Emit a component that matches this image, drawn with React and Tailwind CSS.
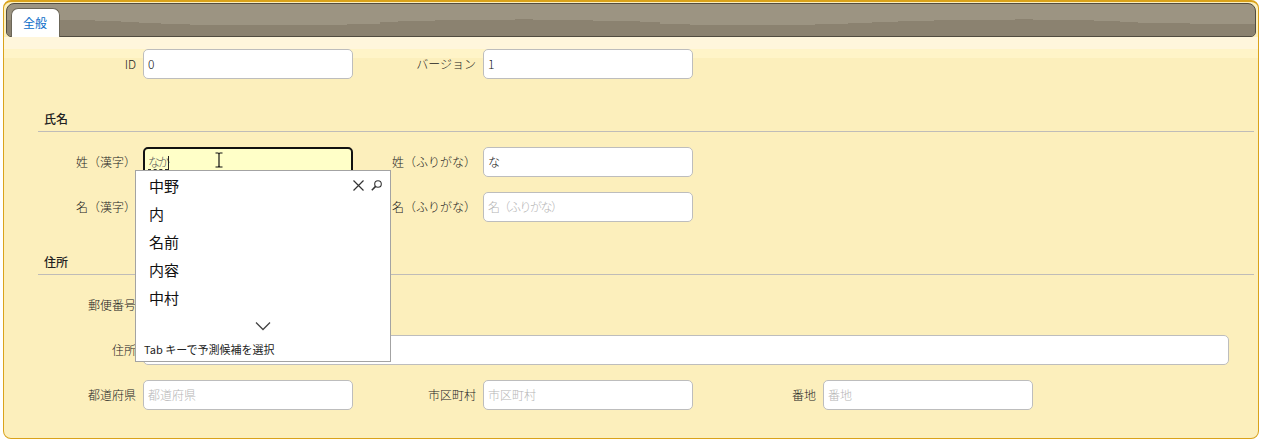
function Field({ label, value, placeholder, focused, wide, inputClass, children }) {
  return (
    <div className={wide ? "flex items-center flex-1 min-w-0" : "flex items-center w-[340px] shrink-0"}>
      <label className="w-[123px] shrink-0 text-right text-[12px] font-light leading-[30px] text-[#222222] whitespace-nowrap mr-[7px]">{label}</label>
      <div className={wide ? "relative flex-1" : "relative w-[210px]"}>
        {focused ? (
          <div className="relative h-[30px] rounded-[5px] border-2 border-[#111111] bg-[#ffffc8] pl-[3px] text-[12px] font-light text-[#555555] flex items-center">
            <span className="border-b border-dashed border-[#333333] leading-[14px] h-[15px] tracking-[-2px] mt-[1px]">なか</span>
            <span className="w-px h-[15px] bg-[#222222] mt-[2px]"></span>
            <svg className="absolute left-[70px] top-[3px]" width="8" height="16" viewBox="0 0 8 16" fill="none" stroke="#111" strokeWidth="1.2">
              <path d="M0.5 1 H3 Q4 1 4 2.5 V13.5 Q4 15 3 15 H0.5 M7.5 1 H5 Q4 1 4 2.5 M4 13.5 Q4 15 5 15 H7.5" />
            </svg>
          </div>
        ) : (
          <input
            readOnly
            value={value || ""}
            placeholder={placeholder}
            className={"block w-full h-[30px] rounded-[5px] border border-[#bdbdbd] bg-white pl-[4px] pb-[2px] text-[12px] font-light text-[#111111] placeholder:text-[#b5b5b5] outline-none " + (inputClass || "")}
          />
        )}
        {children}
      </div>
    </div>
  );
}

function Section({ title }) {
  return (
    <div className="ml-[34px] mr-[4px] border-b border-[#bfbcb8] h-[24px] pl-[6px] text-[12px] font-medium leading-[22px] text-[#222222]">
      {title}
    </div>
  );
}

function Popup() {
  const items = ["中野", "内", "名前", "内容", "中村"];
  return (
    <div className="absolute left-[-8px] top-[23px] z-10 w-[256px] h-[192px] border border-[#a3a3a3] bg-white flex flex-col">
      <div className="absolute right-[8px] top-[9px] flex items-center gap-[7px]">
        <svg width="11" height="11" viewBox="0 0 11 11" fill="none" stroke="#333" strokeWidth="1.2">
          <path d="M0.5 0.5 L10.5 10.5 M10.5 0.5 L0.5 10.5" />
        </svg>
        <svg width="11" height="11" viewBox="0 0 11 11" fill="none" stroke="#333" strokeWidth="1.1">
          <circle cx="7" cy="4" r="3.3" />
          <path d="M4.6 6.4 L0.8 10.2" strokeWidth="1.5" />
        </svg>
      </div>
      <div className="pl-[13px] pt-[1px]">
        {items.map((t) => (
          <div key={t} className="h-[28px] leading-[28px] text-[15px] font-normal text-[#111111]">{t}</div>
        ))}
      </div>
      <div className="flex justify-center mt-[9px]">
        <svg width="16" height="10" viewBox="0 0 16 10" fill="none" stroke="#444" strokeWidth="1.3">
          <path d="M1 1.5 L8 8.5 L15 1.5" />
        </svg>
      </div>
      <div className="pl-[8px] mt-[9px] text-[11px] font-normal leading-[18px] text-[#222222] whitespace-nowrap">Tab キーで予測候補を選択</div>
    </div>
  );
}

const steps = [
  [95, 20], [121, 21], [139, 22], [161, 23], [190, 24], [347, 25], [380, 24], [398, 22], [435, 21],
  [515, 20], [533, 19], [593, 20], [640, 21], [660, 22], [690, 24], [815, 25], [848, 24], [872, 23],
  [898, 22], [934, 21], [1015, 20], [1033, 19], [1094, 20], [1120, 21], [1138, 22], [1190, 23],
  [1256, 24],
];

function wavePoints() {
  const pts = [];
  let x = 0;
  for (const [end, y] of steps) {
    pts.push(`${x},${y - 4}`, `${end - 7},${y - 4}`);
    x = end - 7;
  }
  pts.push("1248,32", "0,32");
  return pts.join(" ");
}

export default function App() {
  return (
    <div className="w-[1262px] h-[440px] bg-white pl-[3px] pr-[3px] pb-px" style={{ fontFamily: '"Noto Sans CJK JP", "Liberation Sans", sans-serif' }}>
      <div className="h-full rounded-[8px] border border-t-2 border-[#d9a21b] bg-[#fcefbc] overflow-hidden">
        <div className="pt-px px-[2px]">
          <div className="relative h-[34px] rounded-t-[8px] rounded-b-[5px] border border-[#514c40] bg-[#9c9482]">
            <svg className="absolute inset-0 w-full h-full rounded-t-[7px] rounded-b-[4px]" viewBox="0 0 1248 32" preserveAspectRatio="none">
              <polygon fill="#8b8270" points={wavePoints()} />
            </svg>
            <div className="absolute left-[4px] top-[4px] w-[49px] h-[29px] rounded-t-[7px] border border-b-0 border-[#6b6658] bg-white pr-[1px] text-center text-[12px] font-normal leading-[27px] text-[#0a6cc8]">全般</div>
          </div>
        </div>
        <div className="h-[12px] bg-[#fff6dc]"></div>
        <div className="relative">
          <div className="absolute inset-x-0 top-0 h-[9px] bg-[#fff4c8]"></div>
          <div className="relative">
            <div className="flex pl-[9px]">
              <Field label="ID" value="0" />
              <Field label="バージョン" value="1" />
            </div>
            <div className="mt-[29px]"><Section title="氏名" /></div>
            <div className="flex pl-[9px] mt-[15px]">
              <Field label="姓（漢字）" focused>
                <Popup />
              </Field>
              <Field label="姓（ふりがな）" value="な" />
            </div>
            <div className="flex pl-[9px] mt-[15px]">
              <Field label="名（漢字）" />
              <Field label="名（ふりがな）" placeholder="名（ふりがな）" inputClass="placeholder:tracking-[-1.5px]" />
            </div>
            <div className="mt-[29px]"><Section title="住所" /></div>
            <div className="flex pl-[9px] mt-[15px]">
              <Field label="郵便番号" />
            </div>
            <div className="flex pl-[9px] pr-[29px] mt-[15px]">
              <Field label="住所" wide />
            </div>
            <div className="flex pl-[9px] mt-[15px]">
              <Field label="都道府県" placeholder="都道府県" />
              <Field label="市区町村" placeholder="市区町村" />
              <Field label="番地" placeholder="番地" />
            </div>
          </div>
        </div>
      </div>
    </div>
  );
}
